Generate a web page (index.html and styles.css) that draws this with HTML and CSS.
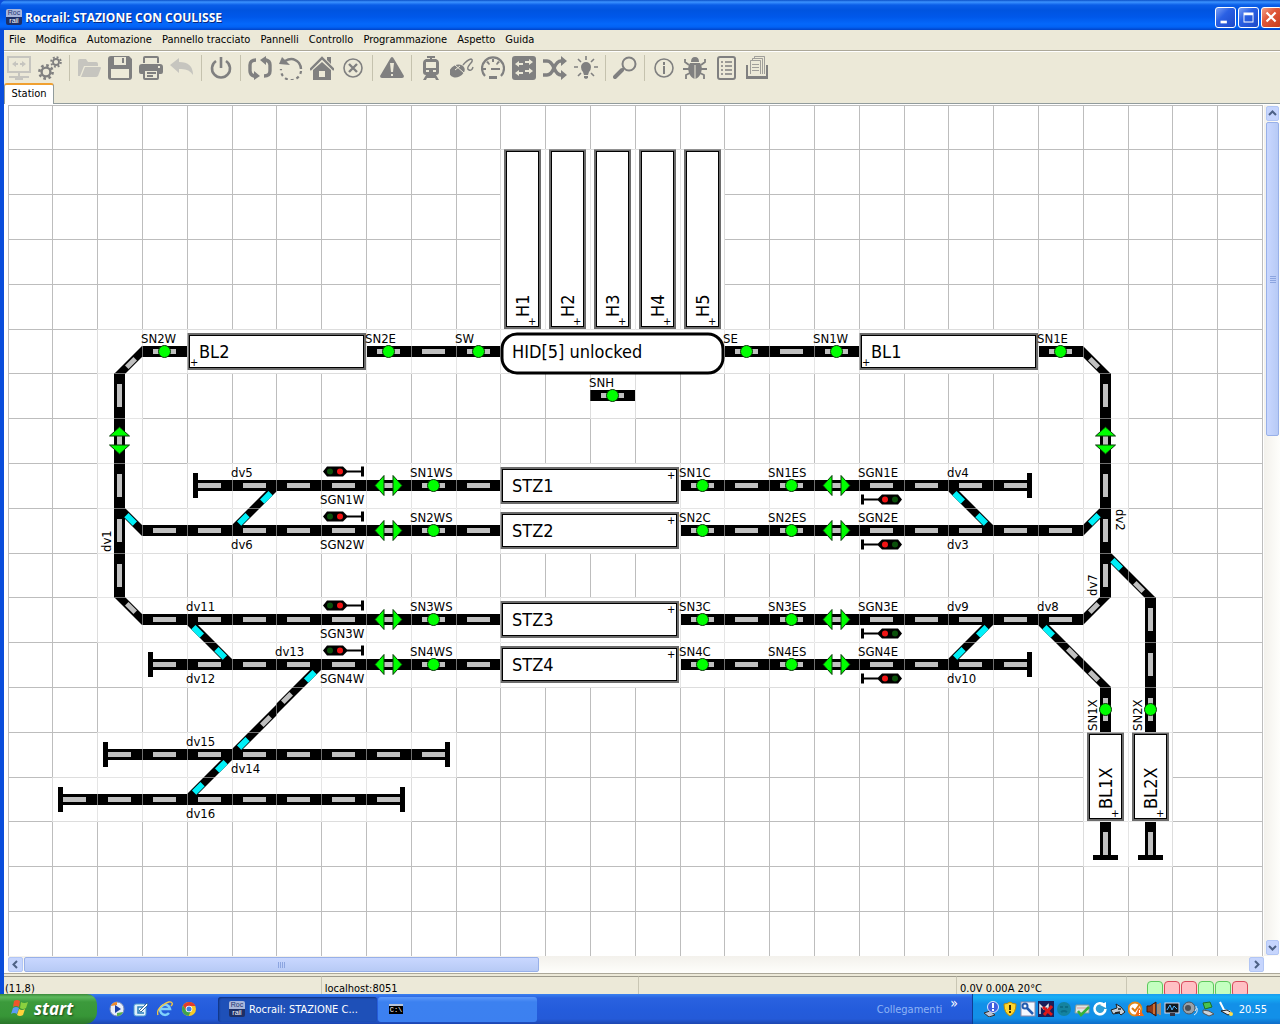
FILE: index.html
```html
<!DOCTYPE html>
<html lang="it">
<head>
    <meta charset="UTF-8">
    <meta name="viewport" content="width=device-width, initial-scale=1.0">
    <title>Rocrail: STAZIONE CON COULISSE</title>
    <link rel="stylesheet" href="styles.css">
</head>
<body>
    <div class="window">
        <header class="titlebar">
            <span class="app-icon"><span>Roc</span><span>rail</span></span>
            <h1>Rocrail: STAZIONE CON COULISSE</h1>
            <div class="window-buttons">
                <button class="win-btn" aria-label="Riduci a icona"><svg viewBox="0 0 21 21"><path d="M5 14h7v3H5z" fill="#fff"/></svg></button>
                <button class="win-btn" aria-label="Ingrandisci"><svg viewBox="0 0 21 21"><path d="M5 5h11v11H5zM6 8v7h9V8z" fill="#fff" fill-rule="evenodd"/></svg></button>
                <button class="win-btn close" aria-label="Chiudi"><svg viewBox="0 0 21 21"><path d="M5 5l10 10M15 5L5 15" stroke="#fff" stroke-width="2.4"/></svg></button>
            </div>
        </header>

        <div class="frame">
            <nav class="menubar">
                <button>File</button>
                <button>Modifica</button>
                <button>Automazione</button>
                <button>Pannello tracciato</button>
                <button>Pannelli</button>
                <button>Controllo</button>
                <button>Programmazione</button>
                <button>Aspetto</button>
                <button>Guida</button>
            </nav>

            <div class="toolbar">
                <button class="disabled" aria-label="Connetti"><svg viewBox="0 0 24 24"><path d="M1 1h22v15H1z" fill="none" stroke="currentColor" stroke-width="2"/><path d="M5 8l4-3v2h2v2H9v2zM19 8l-4-3v2h-2v2h2v2zM11 16h2v4h9v2H2v-2h9zM8 22h8v2H8z"/></svg></button>
                <button aria-label="Proprietà"><svg viewBox="0 0 24 24"><circle cx="8" cy="16" r="4.4" fill="none" stroke="currentColor" stroke-width="2.4"/><circle cx="8" cy="16" r="6.6" fill="none" stroke="currentColor" stroke-width="2.6" stroke-dasharray="2.6 2.58"/><circle cx="18" cy="6" r="3" fill="none" stroke="currentColor" stroke-width="1.8"/><circle cx="18" cy="6" r="4.8" fill="none" stroke="currentColor" stroke-width="2" stroke-dasharray="1.9 1.87"/></svg></button>
                <span class="sep"></span>
                <button class="disabled" aria-label="Apri"><svg viewBox="0 0 24 24"><path d="M1 20V5q0-2 2-2h6l2 3h8q2 0 2 2v2H7L3 20zM8 11h15q1 0 1 1l-3 8q-1 1-2 1H4z"/></svg></button>
                <button aria-label="Salva"><svg viewBox="0 0 24 24"><path d="M3 0h18l3 3v18q0 3-3 3H3q-3 0-3-3V3q0-3 3-3zM6 1v8h12V1zM14 2h2v5h-2zM3 13v9h18v-9z" fill-rule="evenodd"/></svg></button>
                <button aria-label="Stampa"><svg viewBox="0 0 24 24"><path d="M5 7V2q0-1 1-1h12q1 0 1 1v5" fill="none" stroke="currentColor" stroke-width="2"/><path d="M3 8h18q3 0 3 3v5q0 2-2 2h-2v-4H4v4H2q-2 0-2-2v-5q0-3 3-3zM19 10v2h2v-2z" fill-rule="evenodd"/><path d="M5 14h14v8q0 1-1 1H6q-1 0-1-1zM8 17h9M8 20h6" fill="none" stroke="currentColor" stroke-width="2"/></svg></button>
                <button class="disabled" aria-label="Annulla"><svg viewBox="0 0 24 24"><path d="M0 9l9-7v4q14 0 14 13-4-7-14-6v4z"/></svg></button>
                <span class="sep"></span>
                <button aria-label="Alimentazione"><svg viewBox="0 0 24 24"><path d="M7 5a9 9 0 1 0 10 0M12 1v11" fill="none" stroke="currentColor" stroke-width="2.6"/></svg></button>
                <span class="sep"></span>
                <button aria-label="Auto"><svg viewBox="0 0 24 24"><path d="M8 20H6q-4-1-4-5V9q0-5 6-5M16 4h2q4 1 4 5v6q0 5-6 5" fill="none" stroke="currentColor" stroke-width="3.4"/><path d="M6 15v9l6-4zM18 0v9l-6-5z"/></svg></button>
                <button aria-label="Ripristina"><svg viewBox="0 0 24 24"><path d="M6 5q8-5 14 2 2 3 2 6" fill="none" stroke="currentColor" stroke-width="2.4"/><path d="M22 15a10 10 0 0 1-20-2" fill="none" stroke="currentColor" stroke-width="2.2" stroke-dasharray="3 3"/><path d="M0 8l3-7 8 8z"/></svg></button>
                <button aria-label="Home"><svg viewBox="0 0 24 24"><path d="M0 14L12 2l12 12" fill="none" stroke="currentColor" stroke-width="2.4"/><path d="M17 1h4v7l-4-4zM3 14l9-8 9 8v10H3zM9 15v6h6v-6z" fill-rule="evenodd"/></svg></button>
                <button aria-label="Ferma"><svg viewBox="0 0 24 24"><circle cx="12" cy="12" r="9" fill="none" stroke="currentColor" stroke-width="1.6"/><path d="M8 8l8 8M16 8l-8 8" stroke="currentColor" stroke-width="2.4"/></svg></button>
                <span class="sep"></span>
                <button aria-label="Emergenza"><svg viewBox="0 0 24 24"><path d="M12 1q1 0 2 2l10 17q0 2-2 2H2q-2 0-2-2L10 3q1-2 2-2zM10 7l1 9h2l1-9zM11 18v2h2v-2z" fill-rule="evenodd"/></svg></button>
                <span class="sep"></span>
                <button aria-label="Locomotive"><svg viewBox="0 0 24 24"><path d="M8 0h8v2h-3v1h4q3 1 3 4v9q0 3-3 3l3 5h-3l-1-2H8l-1 2H4l3-5q-3 0-3-3V7q0-3 3-4h4V2H8zM7 6v6h10V6zM7 14v2h3v-2zM14 14v2h3v-2z" fill-rule="evenodd"/></svg></button>
                <button aria-label="Mouse"><svg viewBox="0 0 24 24"><ellipse cx="7" cy="15" rx="8" ry="6" transform="rotate(-24 7 15)"/><path d="M5 9l9 8M5 14l5-4" stroke="#ece9d8" stroke-width="1"/><path d="M13 9q4-5 8-6 3 1-1 5-4 5-1 6 3 1 4-3" fill="none" stroke="currentColor" stroke-width="1.4"/></svg></button>
                <button aria-label="Velocità"><svg viewBox="0 0 24 24"><path d="M4 20a11 11 0 1 1 16 0" fill="none" stroke="currentColor" stroke-width="2.2"/><path d="M8 20h8v3H8zM10 12h9v2h-9zM11 3h2v3h-2zM2 12h3v2H2zM5 6l2-1 2 3-1 1zM19 6l-2-1-2 3 1 1z"/></svg></button>
                <button aria-label="Scambi"><svg viewBox="0 0 24 24"><path d="M3 0h18q3 0 3 3v18q0 3-3 3H3q-3 0-3-3V3q0-3 3-3z"/><path d="M3 8l4-3v2h4v2H7v2zM21 6l-4-3v2h-4v2h4v2zM3 17l4-3v2h4v2H7v2zM21 15l-4-3v2h-4v2h4v2z" fill="#ece9d8"/></svg></button>
                <button aria-label="Itinerari"><svg viewBox="0 0 24 24"><path d="M0 5h4q4 0 7 7 3 7 7 7h2M0 19h4q4 0 7-7 3-7 7-7h2" fill="none" stroke="currentColor" stroke-width="3.4"/><path d="M18 0l6 5-6 5zM18 14l6 5-6 5z"/></svg></button>
                <button aria-label="Luci"><svg viewBox="0 0 24 24"><path d="M12 6a5 5 0 0 1 5 5q0 3-2 5l-1 3h-4l-1-3q-2-2-2-5a5 5 0 0 1 5-5zM10 20h4v2l-2 1-2-1z"/><path d="M12 0v4M0 11h4M20 11h4M4 3l3 3M20 3l-3 3M4 20l3-3M20 20l-3-3" stroke="currentColor" stroke-width="1.6"/></svg></button>
                <span class="sep"></span>
                <button aria-label="Cerca"><svg viewBox="0 0 24 24"><circle cx="16" cy="8" r="6.5" fill="none" stroke="currentColor" stroke-width="2"/><path d="M11 12l-2 2" stroke="currentColor" stroke-width="2"/><path d="M9 14L2 21" stroke="currentColor" stroke-width="4" stroke-linecap="round"/></svg></button>
                <span class="sep"></span>
                <button aria-label="Informazioni"><svg viewBox="0 0 24 24"><circle cx="12" cy="12" r="9" fill="none" stroke="currentColor" stroke-width="1.6"/><path d="M11 6h2v3h-2zM11 10h2v8h-2z"/></svg></button>
                <button aria-label="Debug"><svg viewBox="0 0 24 24"><path d="M8 6q0-5 4-5t4 5zM7 7h10q3 4 1 10-2 5-6 6-4-1-6-6-2-6 1-10z"/><path d="M12 9v14" stroke="#ece9d8" stroke-width="1"/><path d="M6 9L2 6V3M18 9l4-3V3M6 13H0M18 13h6M7 17l-4 2v4M17 17l4 2v4" fill="none" stroke="currentColor" stroke-width="1.8"/></svg></button>
                <button aria-label="Elenco"><svg viewBox="0 0 24 24"><rect x="4" y="1" width="17" height="22" rx="2" fill="none" stroke="currentColor" stroke-width="2"/><path d="M7 6h2M7 10h2M7 14h2M7 18h2M11 6h7M11 10h7M11 14h7M11 18h7" stroke="currentColor" stroke-width="1.4"/></svg></button>
                <button aria-label="Documenti"><svg viewBox="0 0 24 24"><path d="M1 9v14h22V9h-2v11H3V9z"/><path d="M5.5 18V4.500h10V18M7.500 4V2.500h10V18M9.500 2V.5h10V18M7 8.500h7M7 11.500h7M7 14.500h7" fill="none" stroke="currentColor" stroke-width=".7"/></svg></button>
            </div>

            <div class="tabs" role="tablist">
                <button class="tab" role="tab" aria-selected="true">Station</button>
            </div>

            <main class="panel">
                <div class="canvas">
                    <svg id="plan" class="plan" width="1256" height="852"></svg>
                </div>
                <div class="vscroll">
                    <button aria-label="Su"><svg viewBox="0 0 9 9"><path d="M1 6l3.500-3.500L8 6"/></svg></button>
                    <div class="vthumb"><i></i><i></i><i></i><i></i></div>
                    <button aria-label="Giù"><svg viewBox="0 0 9 9"><path d="M1 3l3.500 3.500L8 3"/></svg></button>
                </div>
                <div class="hscroll">
                    <button aria-label="Sinistra"><svg viewBox="0 0 9 9"><path d="M6 1L2.500 4.500 6 8"/></svg></button>
                    <div class="hthumb"><i></i><i></i><i></i><i></i></div>
                    <button aria-label="Destra"><svg viewBox="0 0 9 9"><path d="M3 1l3.500 3.500L3 8"/></svg></button>
                </div>
            </main>

            <footer class="statusbar">
                <span>(11,8)</span>
                <span>localhost:8051</span>
                <span></span>
                <span>0.0V 0.00A 20°C</span>
                <span class="leds"><i class="on"></i><i></i><i></i><i class="on"></i><i class="on"></i><i></i></span>
            </footer>
        </div>
    </div>

    <div class="taskbar">
        <button class="start">
            <svg viewBox="0 0 18 18"><path d="M3 2q3-2 6 0L8 8Q5 6 2 8z" fill="#f0562b"/><path d="M10 3q3 2 7 0l-2 6q-3 2-6 0z" fill="#8bd13f"/><path d="M2 9q3-2 6 0l-2 6q-3-2-6 0z" fill="#5a9cf5"/><path d="M8 10q3 2 6 0l-2 6q-3 2-6 0z" fill="#ffd23c"/></svg>
            start
        </button>
        <div class="quick">
            <button aria-label="Media Player"><svg viewBox="0 0 16 16"><circle cx="8" cy="8" r="7" fill="#e8eefb" stroke="#7d8db5"/><path d="M2 5a7 7 0 0 1 6-4v3z" fill="#f08a2a"/><path d="M14 11a7 7 0 0 1-6 4v-3z" fill="#57b04a"/><path d="M6 4l6 4-6 4z" fill="#1b3fa8"/></svg></button>
            <button aria-label="Desktop"><svg viewBox="0 0 16 16"><rect x="1" y="3" width="12" height="12" rx="2" fill="#dff0fb" stroke="#4a9ad0"/><path d="M10 6H5v6h6" fill="none" stroke="#2a7fc0" stroke-width="1.5"/><path d="M6 10l8-8 1 2-7 7z" fill="#fff" stroke="#35699b"/></svg></button>
            <button aria-label="Internet Explorer"><svg viewBox="0 0 16 16"><path d="M12 12a5 5 0 1 1 1-4H4" fill="none" stroke="#7fd0fb" stroke-width="2.5"/><path d="M1 14Q-1 9 6 4t9-2q1 1-1 3" fill="none" stroke="#f5c842" stroke-width="1.3"/></svg></button>
            <button aria-label="Chrome"><svg viewBox="0 0 16 16"><circle cx="8" cy="8" r="7" fill="#f6c928"/><path d="M2 4.500A7 7 0 0 1 14.500 5H8L5 9z" fill="#df3d2e"/><path d="M2 4.500A7 7 0 0 0 7.500 15L10 10 5 9z" fill="#3fa34d"/><circle cx="8" cy="8" r="3.3" fill="#fff"/><circle cx="8" cy="8" r="2.5" fill="#3e7fe6"/></svg></button>
        </div>
        <div class="tasks">
            <button class="task active"><span class="app-icon"><span>Roc</span><span>rail</span></span>Rocrail: STAZIONE C...</button>
            <button class="task"><span class="cmd">C:\</span></button>
        </div>
        <div class="links">Collegamenti <span>»</span></div>
        <div class="tray">
            <svg viewBox="0 0 16 16"><path d="M0 12l6-2 5 4-6 2z" fill="#b9c3d6" stroke="#333"/><circle cx="9" cy="6" r="5.5" fill="#3f5fe0" stroke="#dfe8ff"/><path d="M8 2h2v5H8zM8 8h2v2H8z" fill="#fff"/></svg>
            <svg viewBox="0 0 16 16"><path d="M8 1q3 2 6 2 0 9-6 12Q2 12 2 3q3 0 6-2z" fill="#ffd62e" stroke="#b98c00"/><path d="M7 4h2v5H7zM7 10h2v2H7z" fill="#403000"/></svg>
            <svg viewBox="0 0 16 16"><rect x="1" y="1" width="14" height="14" fill="#f4f8ff" stroke="#88a"/><circle cx="5" cy="5" r="2.5" fill="none" stroke="#245cb0" stroke-width="2"/><path d="M7 7l6 6" stroke="#245cb0" stroke-width="2.5"/></svg>
            <svg viewBox="0 0 16 16"><rect width="16" height="16" fill="#1a1f5a"/><path d="M2 13V4l4 4 4-4v6" fill="none" stroke="#eee" stroke-width="1.5"/><path d="M5 6l9 8M14 5l-8 9" stroke="#e01818" stroke-width="3"/></svg>
            <svg viewBox="0 0 16 16"><circle cx="8" cy="8" r="7" fill="#14839f"/><path d="M4 6h3M9 6h3M5 11q3-2 6 0" stroke="#0b6d88" fill="none" stroke-width="2"/></svg>
            <svg viewBox="0 0 16 16"><path d="M2 4h13v8H1z" fill="#dfe5e2" stroke="#8a9a94"/><path d="M3 7h10" stroke="#d99"/><path d="M4 10l3 4 8-8" fill="none" stroke="#35b23a" stroke-width="2.5"/></svg>
            <svg viewBox="0 0 16 16"><circle cx="8" cy="8" r="7" fill="#2d9fd8"/><path d="M12 4a5.500 5.500 0 1 0 1.500 4" fill="none" stroke="#fff" stroke-width="2.5"/><path d="M8 4l6-3v6z" fill="#fff"/></svg>
            <svg viewBox="0 0 16 16"><path d="M1 9l6-2-1-4 5 3 4 5-4 3-2-2-6 1z" fill="#c5cfd8" stroke="#222"/><path d="M5 12l5-1M8 8h3" stroke="#222" stroke-width="1.5"/></svg>
            <svg viewBox="0 0 16 16"><circle cx="7" cy="8" r="6.5" fill="#fff" stroke="#e08a1c" stroke-width="2"/><path d="M4 7l3 3 5-7" fill="none" stroke="#e07c10" stroke-width="2"/><path d="M11 6l5 9H7z" fill="#f26a18"/><path d="M11 9h1v3h-1zM11 13h1v1h-1z" fill="#fff"/></svg>
            <svg viewBox="0 0 16 16"><path d="M1 5h3l6-4v14l-6-4H1z" fill="#8b3a1c" stroke="#401505"/><path d="M8 3v10M12 3v10M14 2v12" stroke="#f08a3c" stroke-width="1.3"/></svg>
            <svg viewBox="0 0 16 16"><rect x="1" y="2" width="14" height="10" fill="#101820" stroke="#dde"/><path d="M3 9l3-5 2 5 2-4 3 3" fill="none" stroke="#4fb4ff"/><path d="M6 12h5v3H6z" fill="#334"/></svg>
            <svg viewBox="0 0 16 16"><circle cx="7" cy="7" r="6" fill="#9aa2aa" stroke="#4c545c"/><circle cx="6" cy="7" r="3" fill="#4a5058"/><path d="M13 10q2-2 1-5M12 14q4-2 3-7" stroke="#e8eef5" fill="none"/></svg>
            <svg viewBox="0 0 16 16"><path d="M3 2l7-1 2 5-7 2z" fill="#49c24e" stroke="#1c6f26"/><path d="M3 9l6 1 5 3-5 2-6-3z" fill="#cbd3da" stroke="#555"/></svg>
            <svg viewBox="0 0 16 16"><path d="M2 1l4 8 7 2" fill="none" stroke="#fff" stroke-width="2"/><path d="M3 10l7 4 4-2-5-3z" fill="#e8e8e8" stroke="#222"/><circle cx="13" cy="13" r="2" fill="#ffe04a"/></svg>
            <time>20.55</time>
        </div>
    </div>

    <script src="plan.js"></script>
</body>
</html>
```

FILE: styles.css
```css
* {
    box-sizing: border-box;
}
body {
    margin: 0;
    height: 100vh;
    display: flex;
    flex-direction: column;
    overflow: hidden;
    background: #0a4ddb;
    font-family: "DejaVu Sans Condensed", "DejaVu Sans", sans-serif;
    font-size: 11px;
    color: #000;
}
button {
    font: inherit;
    color: inherit;
    background: none;
    border: 0;
    padding: 0;
}
svg {
    display: block;
}
.window {
    flex: 1;
    min-height: 0;
    display: flex;
    flex-direction: column;
}

/* title bar */
.titlebar {
    height: 30px;
    display: flex;
    align-items: center;
    gap: 3px;
    padding: 4px 0 0 6px;
    overflow: hidden;
    border-radius: 7px 0 0 0;
    background: linear-gradient(#0a50c8 0, #3c93ff 2px, #0a5ee8 5px, #0054e0 10px, #0058ea 17px, #0468fb 24px, #0262f5 27px, #0043c8 30px);
}
.titlebar h1 {
    flex: 1;
    margin: 0;
    font-family: "Open Sans", "Noto Sans", sans-serif;
    font-size: 12px;
    font-weight: bold;
    color: #fff;
    text-shadow: 1px 1px #0a2a80;
}
.app-icon {
    display: flex;
    flex-direction: column;
    width: 16px;
    height: 16px;
    border-radius: 2px;
    overflow: hidden;
    font-family: "Liberation Sans", sans-serif;
    font-size: 7px;
    line-height: 8px;
    text-align: center;
    background: linear-gradient(#a9b6da 50%, #1d2f66 50%);
    color: #fff;
}
.app-icon span:first-child {
    color: #223470;
}
.window-buttons {
    display: flex;
    gap: 2px;
    margin-right: -2px;
}
.win-btn {
    width: 21px;
    height: 21px;
    border: 1px solid #fff;
    border-radius: 3px;
    background: linear-gradient(135deg, #7ba0f5, #2a60e4 40%, #1d48c8);
}
.win-btn.close {
    background: linear-gradient(135deg, #f2a088, #e0583a 40%, #c83c1c);
}

/* client area */
.frame {
    flex: 1;
    min-height: 0;
    margin-left: 4px;
    display: flex;
    flex-direction: column;
    background: #ece9d8;
}
.menubar {
    height: 21px;
    display: flex;
    align-items: center;
    gap: 10px;
    padding: 0 5px 2px;
    border-bottom: 1px solid #aca899;
}
.toolbar {
    height: 32px;
    display: flex;
    align-items: center;
    gap: 7px;
    padding-left: 3px;
    border-top: 1px solid #fff;
    color: #808080;
}
.toolbar button {
    width: 24px;
    height: 24px;
}
.toolbar svg {
    fill: currentColor;
}
.toolbar .disabled {
    color: #c6c5bf;
}
.sep {
    width: 1px;
    height: 26px;
    background: #c5c2ae;
}
.tabs {
    height: 21px;
    display: flex;
    border-bottom: 1px solid #919b9c;
}
.tab {
    width: 50px;
    height: 21px;
    padding-bottom: 2px;
    background: #fff;
    border: 1px solid #919b9c;
    border-top: 2px solid #f0a030;
    border-bottom: 0;
    border-radius: 3px 3px 0 0;
}

/* track plan */
.panel {
    flex: 1;
    min-height: 0;
    display: grid;
    grid-template-columns: 1fr 16px;
    grid-template-rows: 1fr 17px;
    padding: 1px 0 0 4px;
    background: #fff;
}
.canvas {
    overflow: hidden;
    min-height: 0;
    min-width: 0;
}
.plan {
    font-size: 13px;
}
.plan .name {
    font-size: 18px;
}
.plan .plus {
    font-size: 11px;
}
.grid-line {
    stroke: #bdbdbd;
}
.tile {
    fill: #fff;
    stroke: #d2d2d2;
}
.seam {
    fill: none;
    stroke: #fff;
    stroke-opacity: .25;
}
.dash {
    fill: #c0c0c0;
}
.dash.turn {
    fill: #00f0f8;
}
.green {
    fill: #0f0;
    stroke: #063806;
}
.lamp-green {
    fill: #0a500a;
}
.lamp-red {
    fill: #f01414;
}
.block {
    fill: #fff;
    stroke: #6c6c6c;
    stroke-width: 3;
}
.block-edge {
    fill: none;
    stroke: #000;
}
.turntable {
    fill: #fff;
    stroke: #000;
    stroke-width: 3;
}

/* scroll bars */
.vscroll,
.hscroll {
    display: flex;
    gap: 1px;
    background: linear-gradient(90deg, #f3f1ec, #fefefb);
}
.vscroll {
    flex-direction: column;
    padding: 1px 1px 1px 2px;
}
.hscroll {
    padding: 1px 0;
    background: linear-gradient(#f3f1ec, #fefefb);
}
.vscroll button,
.hscroll button {
    flex: none;
    width: 15px;
    height: 15px;
    padding: 2px;
    border: 1px solid #b2c6f5;
    border-radius: 2px;
    background: #c6d5fd;
}
.vscroll button {
    width: 13px;
    padding: 2px 1px;
}
.vscroll button svg,
.hscroll button svg {
    width: 9px;
    height: 9px;
    fill: none;
    stroke: #4d6185;
    stroke-width: 2;
}
.vthumb,
.hthumb {
    display: flex;
    align-items: center;
    justify-content: center;
    gap: 1px;
    border: 1px solid #98b0e8;
    border-radius: 2px;
}
.vthumb {
    flex-direction: column;
    height: 37%;
    margin-bottom: auto;
    background: linear-gradient(90deg, #c9d7ff, #b7caf5);
}
.hthumb {
    width: 41%;
    margin-right: auto;
    background: linear-gradient(#c9d7ff, #b7caf5);
}
.vthumb i {
    width: 6px;
    height: 1px;
    background: #8ca5e0;
}
.hthumb i {
    width: 1px;
    height: 6px;
    background: #8ca5e0;
}

/* status bar */
.statusbar {
    height: 21px;
    display: grid;
    grid-template-columns: 1fr 1fr 1fr 170px 153px;
    padding-top: 2px;
    border-top: 1px solid #aca899;
    overflow: hidden;
}
.statusbar > span {
    height: 24px;
    padding: 5px 3px 0;
    line-height: 14px;
    border-top: 1px solid #9d9a8c;
    border-right: 1px solid #c9c6b4;
    white-space: nowrap;
}
.statusbar > span:first-child {
    padding-left: 1px;
}
.statusbar .leds {
    display: flex;
    gap: 1px;
    padding: 4px 0 0 20px;
    border-right: 0;
}
.leds i {
    width: 16px;
    height: 16px;
    border: 1px solid #d84a5c;
    border-radius: 4px;
    background: #ffc0c4;
}
.leds .on {
    border-color: #5cc85c;
    background: #c4ffc0;
}

/* taskbar */
.taskbar {
    height: 30px;
    display: flex;
    align-items: stretch;
    background: linear-gradient(#3a80f0 0, #2a62e0 4px, #245cdc 15px, #245ad8 25px, #1c46b0 30px);
    color: #fff;
}
.start {
    width: 97px;
    display: flex;
    align-items: center;
    gap: 5px;
    padding: 0 0 2px 11px;
    border-radius: 0 10px 12px 0;
    background: linear-gradient(#3a8a3a 0, #5cb85c 3px, #3c9a3c 8px, #379637 22px, #2a752a 30px);
    font-family: "Open Sans", sans-serif;
    font-size: 17px;
    font-style: italic;
    font-weight: bold;
    text-shadow: 1px 1px 2px #1b4a1b;
}
.start svg {
    width: 18px;
    height: 18px;
}
.quick {
    width: 121px;
    display: flex;
    align-items: center;
    gap: 8px;
    padding-left: 12px;
}
.quick svg {
    width: 16px;
    height: 16px;
}
.tasks {
    flex: 1;
    display: flex;
    align-items: center;
    gap: 1px;
}
.task {
    flex: 0 1 159px;
    height: 25px;
    display: flex;
    align-items: center;
    gap: 4px;
    padding-left: 11px;
    border-radius: 3px;
    background: linear-gradient(#5c98fa, #3c81f0 5px, #3c80f0);
    white-space: nowrap;
}
.task.active {
    background: #1e50b8;
    box-shadow: inset 1px 1px 2px #10307c;
}
.cmd {
    width: 14px;
    height: 10px;
    border-top: 2px solid #b8c4d8;
    background: #000;
    font-family: "Liberation Mono", monospace;
    font-size: 7px;
    line-height: 8px;
}
.links {
    display: flex;
    align-items: center;
    gap: 8px;
    padding: 0 14px;
    color: #8fb4f5;
}
.links span {
    padding-bottom: 12px;
    font-size: 14px;
    color: #fff;
}
.tray {
    width: 308px;
    display: flex;
    align-items: center;
    gap: 2px;
    padding: 0 13px 0 11px;
    border-left: 1px solid #0f3d94;
    background: linear-gradient(#1a9cf0 0, #18b0f5 3px, #1290e8 10px, #1290e8 24px, #0f6cc8 30px);
}
.tray svg {
    flex: none;
    width: 16px;
    height: 16px;
}
.tray time {
    margin-left: auto;
}
```

FILE: plan.js
```js
// Track plan: every item is placed by column and row of the grid
const CELL = 44.8;
const COLS = 28;
const ROWS = 19;
const NS = 'http://www.w3.org/2000/svg';
const plan = document.getElementById('plan');
const seams = [];

const at = (n) => Math.floor(n * CELL);

function add(tag, attrs, text) {
    const el = document.createElementNS(NS, tag);
    for (const key in attrs) el.setAttribute(key, attrs[key]);
    if (text) el.textContent = text;
    plan.appendChild(el);
    return el;
}

function tile(c, r, w = 1, h = 1) {
    const box = { x: at(c) + 0.5, y: at(r) + 0.5, width: at(c + w) - at(c), height: at(r + h) - at(r) };
    add('rect', { ...box, class: 'tile' });
    seams.push(box);
}

function label(x, y, text, angle = 0, cls = 'label') {
    add('text', { x, y, class: cls, transform: `rotate(${angle} ${x} ${y})` }, text);
}

// straight pieces
function horizontal(c, r, from = 0, to = 45) {
    add('rect', { x: at(c) + from, y: at(r) + 17, width: to - from, height: 11 });
    add('rect', { x: at(c) + 11, y: at(r) + 20, width: 23, height: 5, class: 'dash' });
}

function vertical(c, r, to = 45) {
    add('rect', { x: at(c) + 17, y: at(r), width: 11, height: to });
    add('rect', { x: at(c) + 20, y: at(r) + 11, width: 5, height: 23, class: 'dash' });
}

// 45 degree piece between two sides of a cell, e.g. 'WS'
function diagonal(c, r, sides, turn = false) {
    const x = at(c), y = at(r);
    const sx = sides[0] === 'W' ? 0 : 45;
    const sy = sides[1] === 'N' ? 0 : 45;
    const same = (sx === 0) === (sy === 0);
    const [a, b] = same ? [17, 28] : [28, 17];
    add('polygon', { points: `${x + sx},${y + 17} ${x + a},${y + sy} ${x + b},${y + sy} ${x + sx},${y + 28}` });
    const cx = x + (sx ? 34 : 11), cy = y + (sy ? 34 : 11);
    add('rect', {
        x: cx - 6, y: cy - 2.5, width: 12, height: turn ? 6 : 5,
        transform: `rotate(${same ? -45 : 45} ${cx} ${cy})`,
        class: turn ? 'dash turn' : 'dash'
    });
}

function sensor(c, r) {
    add('circle', { cx: at(c) + 22.5, cy: at(r) + 22.5, r: 6, class: 'green' });
}

function arrows(c, r, angle = 0) {
    const x = at(c), y = at(r);
    const transform = `rotate(${angle} ${x + 22.5} ${y + 22.5})`;
    add('path', { class: 'green', transform, d: `M${x + 9} ${y + 22.5}l9-10v20zM${x + 36} ${y + 22.5}l-9-10v20z` });
}

function signal(c, r, side) {
    const x = at(c), y = at(r);
    const transform = side === 'E' ? `rotate(180 ${x + 22.5} ${y + 22.5})` : '';
    add('path', { transform, d: `M${x + 2} ${y + 8.5}l4-5h16l4 4h14v-4h3v10h-3v-4h-14l-4 4h-16z` });
    add('circle', { transform, cx: x + 9, cy: y + 8.5, r: 3, class: 'lamp-green' });
    add('circle', { transform, cx: x + 19, cy: y + 8.5, r: 3, class: 'lamp-red' });
}

// grey frame with a black line along its inside
function frame(x, y, width, height) {
    add('rect', { x, y, width, height, class: 'block' });
    add('rect', { x: x + 1, y: y + 1, width: width - 2, height: height - 2, class: 'block-edge' });
}

function block(c, r, name, plusSide) {
    const x = at(c), y = at(r);
    tile(c, r, 4, 1);
    frame(x + 1.5, y + 5.5, 176, 34);
    label(x + 12, y + 29, name, 0, 'name');
    if (plusSide === 'left') label(x + 3, y + 37, '+', 0, 'plus');
    else label(x + 167, y + 16, '+', 0, 'plus');
}

function tallBlock(c, r, rows, name) {
    const x = at(c), y = at(r), bottom = at(r + rows);
    tile(c, r, 1, rows);
    frame(x + 5.5, y + 1.5, 34, bottom - y - 3);
    label(x + 29, bottom - 12, name, -90, 'name');
    label(x + 28, bottom - 4, '+', 0, 'plus');
}

for (let c = 0; c <= COLS; c++) {
    add('line', { x1: at(c) + 0.5, x2: at(c) + 0.5, y1: 0, y2: at(ROWS), class: 'grid-line' });
}
for (let r = 0; r <= ROWS; r++) {
    add('line', { x1: 0, x2: at(COLS), y1: at(r) + 0.5, y2: at(r) + 0.5, class: 'grid-line' });
}

// horizontal runs: [row, first column, last column]
const runs = [
    [5, 3, 3], [5, 8, 10], [5, 16, 18], [5, 23, 23], [6, 13, 13],
    [8, 5, 10], [8, 15, 21],
    [9, 3, 10], [9, 15, 23],
    [11, 3, 10], [11, 15, 23],
    [12, 4, 10], [12, 15, 21],
    [14, 3, 8], [15, 2, 7]
];
const buffers = [[4, 8, 'L'], [22, 8, 'R'], [3, 12, 'L'], [22, 12, 'R'], [2, 14, 'L'], [9, 14, 'R'], [1, 15, 'L'], [8, 15, 'R']];
const verticals = [
    [2, 6], [2, 7], [2, 8], [2, 9], [2, 10],
    [24, 6], [24, 7], [24, 8], [24, 9], [24, 10],
    [25, 11], [25, 12], [24, 13], [25, 13]
];
const curves = [
    [2, 5, 'ES'], [24, 5, 'WS'], [2, 11, 'EN'], [24, 11, 'WN'],
    [25, 10, 'WS'], [23, 12, 'EN'], [24, 12, 'WS'], [6, 13, 'WN'], [5, 13, 'ES']
];
const turnouts = [
    [5, 8, 'ES'], [5, 9, 'WN'], [2, 9, 'EN'], [24, 9, 'WN'], [24, 10, 'EN'],
    [21, 8, 'WS'], [21, 9, 'EN'], [4, 11, 'WS'], [4, 12, 'EN'],
    [21, 11, 'ES'], [21, 12, 'WN'], [23, 11, 'WS'], [6, 12, 'ES'],
    [5, 14, 'WN'], [4, 14, 'ES'], [4, 15, 'WN']
];

// tiles first, so that no tile covers a neighbour's track
for (const [r, from, to] of runs) for (let c = from; c <= to; c++) tile(c, r);
for (const [c, r] of [...buffers, ...verticals, ...curves]) tile(c, r);
for (const c of [24, 25]) tile(c, 16);

for (const [r, from, to] of runs) for (let c = from; c <= to; c++) horizontal(c, r);
for (const [c, r] of verticals) vertical(c, r);
for (const [c, r, side] of buffers) {
    if (side === 'L') {
        horizontal(c, r, 6, 45);
        add('rect', { x: at(c) + 6, y: at(r) + 10, width: 5, height: 25 });
    } else {
        horizontal(c, r, 0, 38);
        add('rect', { x: at(c) + 34, y: at(r) + 10, width: 5, height: 25 });
    }
}
for (const c of [24, 25]) {
    vertical(c, 16, 38);
    add('rect', { x: at(c) + 10, y: at(16) + 34, width: 25, height: 5 });
}
for (const [c, r, sides] of curves) diagonal(c, r, sides);
for (const [c, r, sides] of turnouts) diagonal(c, r, sides, true);

for (const [i, name] of ['BL2', 'BL1'].entries()) block(i ? 19 : 4, 5, name, 'left');
for (const [i, r] of [8, 9, 11, 12].entries()) block(11, r, `STZ${i + 1}`, 'right');
for (let i = 0; i < 5; i++) tallBlock(11 + i, 1, 4, `H${i + 1}`);
tallBlock(24, 14, 2, 'BL1X');
tallBlock(25, 14, 2, 'BL2X');

tile(11, 5, 5, 1);
for (const box of seams) add('rect', { ...box, class: 'seam' });
add('rect', { x: at(11) + 2, y: at(5) + 5, width: 221, height: 39, rx: 15, class: 'turntable' });
label(at(11) + 12, at(5) + 29, 'HID[5] unlocked', 0, 'name');

// sensors and their names
const sensors = [
    [3, 5, 'SN2W'], [8, 5, 'SN2E'], [10, 5, 'SW'], [16, 5, 'SE'], [18, 5, 'SN1W'], [23, 5, 'SN1E'], [13, 6, 'SNH']
];
[8, 9, 11, 12].forEach((r, i) => {
    const n = i + 1;
    sensors.push([9, r, `SN${n}WS`], [15, r, `SN${n}C`], [17, r, `SN${n}ES`]);
    arrows(8, r);
    arrows(18, r);
    signal(7, r, 'W');
    signal(19, r, 'E');
    label(at(7) - 1, at(r) + 41, `SGN${n}W`);
    label(at(19) - 1, at(r) + 14, `SGN${n}E`);
});
for (const [c, r, name] of sensors) {
    sensor(c, r);
    label(at(c) - 1, at(r) + 14, name);
}
for (const c of [24, 25]) {
    sensor(c, 13);
    label(at(c) + 14, at(14) - 1, `SN${c - 23}X`, -90);
}
arrows(2, 7, 90);
arrows(24, 7, 90);

// turnout names: above or below the track
const names = [
    [5, 8, 'dv5', 14], [21, 8, 'dv4', 14], [5, 9, 'dv6', 41], [21, 9, 'dv3', 41],
    [4, 11, 'dv11', 14], [21, 11, 'dv9', 14], [23, 11, 'dv8', 14],
    [4, 12, 'dv12', 41], [6, 12, 'dv13', 14], [21, 12, 'dv10', 41],
    [4, 14, 'dv15', 14], [5, 14, 'dv14', 41], [4, 15, 'dv16', 41]
];
for (const [c, r, name, dy] of names) label(at(c) - 1, at(r) + dy, name);
label(at(2) + 14, at(10) - 1, 'dv1', -90);
label(at(24) + 14, at(11) - 1, 'dv7', -90);
label(at(24) + 33, at(9) + 1, 'dv2', 90);
```
